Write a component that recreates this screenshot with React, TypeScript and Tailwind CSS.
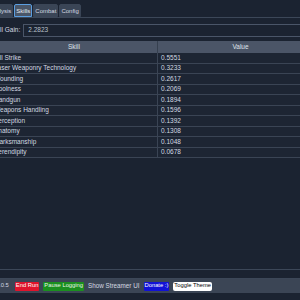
const skills: { name: string; value: string }[] = [
  { name: 'Kill Strike', value: '0.5551' },
  { name: 'Laser Weaponry Technology', value: '0.3233' },
  { name: 'Wounding', value: '0.2617' },
  { name: 'Coolness', value: '0.2069' },
  { name: 'Handgun', value: '0.1894' },
  { name: 'Weapons Handling', value: '0.1596' },
  { name: 'Perception', value: '0.1392' },
  { name: 'Anatomy', value: '0.1308' },
  { name: 'Marksmanship', value: '0.1048' },
  { name: 'Serendipity', value: '0.0678' },
]

const tabs = ['Analysis', 'Skills', 'Combat', 'Config']

export default function App() {
  return (
    <div className="w-[300px] h-[300px] overflow-hidden bg-[#1b2331] text-[#d3d9e1] text-[6.5px] leading-none whitespace-nowrap font-['Liberation_Sans',Arial,sans-serif]">
      <div className="-ml-[14px] w-[342px] h-full flex flex-col">
        {/* Tabs */}
        <div className="h-[18px] flex items-end gap-[1px] border-b border-[#3c4758] pl-[1px] text-[6px]">
          {tabs.map((t) => (
            <div
              key={t}
              className={`h-[13px] px-[1px] flex items-center rounded-t-[2px] ${
                t === 'Skills'
                  ? 'bg-[#4a5668] border border-[#5b9ee0] text-[#e6ebf0]'
                  : 'bg-[#3a4556] border border-[#3a4556]'
              }`}
            >
              {t}
            </div>
          ))}
        </div>

        {/* Skill gain */}
        <div className="flex items-center gap-[3px] pl-[5px] mt-[6px] h-[13px]">
          <span className="shrink-0">Skill Gain:</span>
          <div className="flex-1 h-[13px] border border-[#4a5568] bg-[#1b2331] flex items-center pl-[4px] text-[#b9c0ca]">
            2.2823
          </div>
        </div>

        {/* Table */}
        <div className="mt-[4px] px-[5px] flex-1 flex flex-col">
          <div className="h-[229px] border-b border-[#3c4758] flex flex-col">
            <div className="grid grid-cols-2 h-[12px] bg-[#4b5567] text-[#dfe4ea]">
              <div className="flex items-center justify-center">Skill</div>
              <div className="flex items-center justify-center border-l border-[#36404f]">Value</div>
            </div>
            {skills.map((s) => (
              <div key={s.name} className="grid grid-cols-2 h-[10.5px] border-b border-[#3a4454] bg-[#1d2533]">
                <div className="flex items-center pl-[3px]">{s.name}</div>
                <div className="flex items-center pl-[3px] border-l border-[#3a4454]">{s.value}</div>
              </div>
            ))}
          </div>
        </div>

        {/* Footer */}
        <div className="mt-[8px] border-t border-[#3c4758] h-[15px] bg-[#3b4555] flex items-center gap-[4px] pl-[7px] text-[5.8px]">
          <span className="mr-[2px]">v1.0.5</span>
          <span className="bg-[#e0142c] text-white px-[1px] h-[9px] flex items-center rounded-[1px]">End Run</span>
          <span className="bg-[#1b8f1f] text-[#e8f5e8] px-[1px] h-[9px] flex items-center rounded-[1px]">Pause Logging</span>
          <span className="text-[6.3px]">Show Streamer UI</span>
          <span className="bg-[#1212d6] text-white px-[1px] h-[9px] flex items-center rounded-[1px]">Donate :)</span>
          <span className="bg-white text-black px-[1px] h-[9px] flex items-center rounded-[2px]">Toggle Theme</span>
        </div>
        <div className="flex-1 bg-[#1b2331]" />
      </div>
    </div>
  )
}
